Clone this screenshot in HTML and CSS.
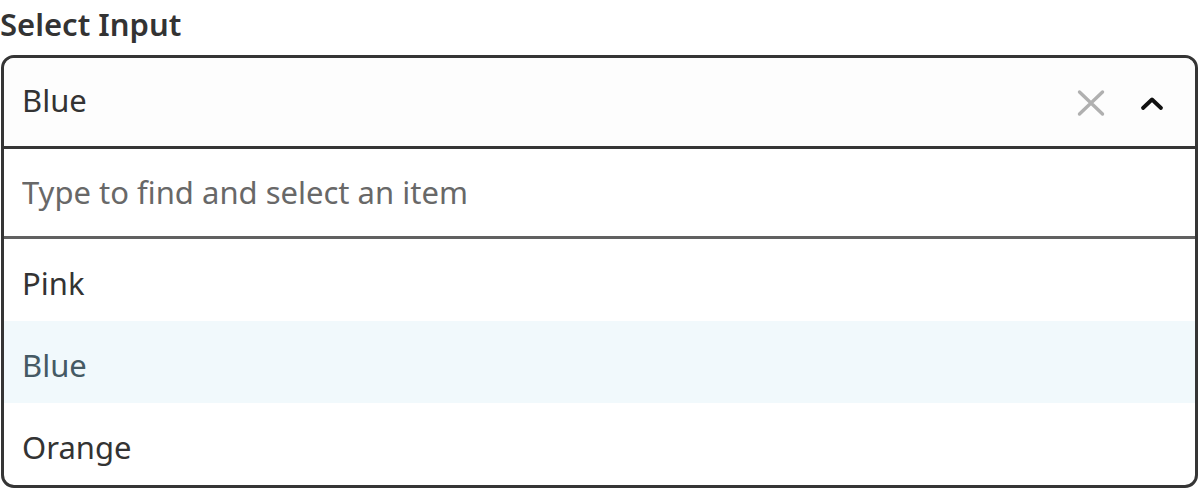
FILE: index.html
```html
<!DOCTYPE html>
<html lang="en">
<head>
    <meta charset="UTF-8">
    <title>Select Input</title>
    <link rel="stylesheet" href="styles.css">
</head>
<body>
    <div class="field">
        <label class="field-label" for="search">Select Input</label>

        <div class="select">
            <!-- Current value -->
            <div class="select-head">
                <span class="select-value">Blue</span>
                <button class="icon-btn clear" aria-label="Clear">
                    <svg width="30" height="30" viewBox="0 0 30 30">
                        <path d="M3.5 4 L26.5 26 M26.5 4 L3.5 26" stroke="#b0b0b0" stroke-width="3.4" stroke-linecap="round" fill="none"/>
                    </svg>
                </button>
                <button class="icon-btn toggle" aria-label="Close list">
                    <svg width="26" height="16" viewBox="0 0 26 16">
                        <path d="M4 13 L13 4.5 L22 13" stroke="#111111" stroke-width="3.8" stroke-linecap="round" stroke-linejoin="round" fill="none"/>
                    </svg>
                </button>
            </div>

            <!-- Search -->
            <div class="select-search">
                <input type="text" id="search" placeholder="Type to find and select an item">
            </div>

            <!-- Options -->
            <ul class="select-list">
                <li class="option">Pink</li>
                <li class="option selected">Blue</li>
                <li class="option">Orange</li>
            </ul>
        </div>
    </div>
</body>
</html>
```

FILE: styles.css
```css
:root {
    --border-dark: #353535;
    --border-mid: #616161;
    --text-main: #333333;
    --text-muted: #686868;
    --highlight-bg: #f1f9fc;
    --highlight-text: #455a64;
}

body {
    margin: 0;
    padding: 0;
    font-family: "Noto Sans", "Open Sans", sans-serif;
    color: var(--text-main);
    background: #ffffff;
}

.field {
    padding: 0 2px 0 1px;
}

.field-label {
    display: block;
    font-size: 31px;
    font-weight: 600;
    line-height: 48px;
    height: 48px;
    margin-left: -1px;
    margin-bottom: 7px;
}

.select {
    border: 3px solid var(--border-dark);
    border-radius: 13px;
    overflow: hidden;
    font-size: 31px;
}

.select-head {
    display: flex;
    align-items: center;
    height: 88px;
    padding: 0 30px 0 18px;
    background: #fdfdfd;
    border-bottom: 3px solid var(--border-dark);
}

.select-value {
    flex: 1;
    line-height: 40px;
    margin-top: -4px;
}

.icon-btn {
    display: flex;
    align-items: center;
    justify-content: center;
    background: none;
    border: none;
    padding: 0;
    cursor: pointer;
}

.clear {
    margin-right: 33px;
    margin-top: 2px;
}

.toggle {
    margin-top: 2px;
}

.select-search {
    height: 87px;
    display: flex;
    align-items: center;
    border-bottom: 3px solid var(--border-mid);
}

.select-search input {
    width: 100%;
    border: none;
    outline: none;
    padding: 0 18px;
    margin-top: -2px;
    font: inherit;
    color: var(--text-main);
    background: transparent;
}

.select-search input::placeholder {
    color: var(--text-muted);
}

.select-list {
    list-style: none;
    margin: 0;
    padding: 0;
}

.option {
    box-sizing: border-box;
    height: 82px;
    padding: 6px 18px 0;
    display: flex;
    align-items: center;
}

.option.selected {
    background: var(--highlight-bg);
    color: var(--highlight-text);
}
```
